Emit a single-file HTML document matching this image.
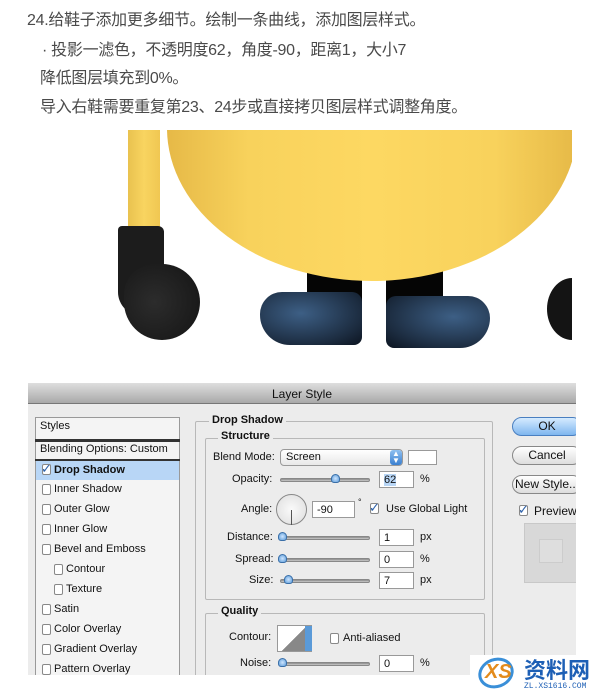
<!DOCTYPE html>
<html><head><meta charset="utf-8"><style>
*{margin:0;padding:0;box-sizing:border-box}
body{width:600px;height:693px;background:#fff;position:relative;overflow:hidden;font-family:"Liberation Sans","Noto Sans CJK SC",sans-serif}
.t{position:absolute;font-size:16px;color:#4a4a4a;white-space:nowrap;font-family:"Liberation Sans","Noto Sans CJK SC",sans-serif;letter-spacing:-0.3px}
.a{position:absolute}
.dlg{position:absolute;left:28px;top:383px;width:548px;height:292px;background:#ececec;overflow:hidden}
.dlg *{font-family:"Liberation Sans","DejaVu Sans",sans-serif}
.l{position:absolute;font-size:11px;color:#111;white-space:nowrap}
.b{font-weight:bold}
.cb{position:absolute;width:9px;height:11px;border:1px solid #888;border-radius:2px;background:#fff}
.inp{position:absolute;height:17px;background:#fff;border:1px solid #999;font-size:11px;padding:2px 4px;color:#111}
.sl{position:absolute;height:4px;border-radius:2px;background:linear-gradient(#888,#ccc);border:1px solid #888}
.kn{position:absolute;width:9px;height:9px;border-radius:50% 50% 3px 3px;background:radial-gradient(#cfe6ff,#5a9ad8);border:1px solid #3a6fa8}
.fs{position:absolute;border:1px solid #b8b8b8;border-radius:2px}
.btn{position:absolute;left:484px;width:70px;height:19px;border:1px solid #888;border-radius:10px;background:linear-gradient(#fff,#ddd);font-size:12px;text-align:center;line-height:17px;color:#111}
</style></head><body>
<div class="t" style="left:27px;top:6px">24.给鞋子添加更多细节。绘制一条曲线，添加图层样式。</div>
<div class="t" style="left:42px;top:36px">· 投影一滤色，不透明度62，角度-90，距离1，大小7</div>
<div class="t" style="left:40px;top:64px">降低图层填充到0%。</div>
<div class="t" style="left:40px;top:93px">导入右鞋需要重复第23、24步或直接拷贝图层样式调整角度。</div>

<div class="a" style="left:0;top:130px;width:572px;height:245px;overflow:hidden">
 <div class="a" style="left:128px;top:0;width:32px;height:100px;background:linear-gradient(90deg,#e9c24f,#f8d460 50%,#f0c752);border-radius:0 0 4px 4px"></div>
 <div class="a" style="left:307px;top:140px;width:55px;height:40px;background:#050505"></div>
 <div class="a" style="left:386px;top:140px;width:57px;height:40px;background:#050505"></div>
 <div class="a" style="left:167px;top:-155px;width:410px;height:306px;border-radius:50%;background:linear-gradient(90deg,#e6b947,#f8d25c 20%,#fdd862 50%,#f8d25c 80%,#e6b947)"></div>
 <div class="a" style="left:260px;top:162px;width:102px;height:53px;border-radius:22px 10px 8px 30px;background:radial-gradient(ellipse at 40% 40%,#3d5f85,#1c2c40 70%,#0c1420)"></div>
 <div class="a" style="left:386px;top:166px;width:104px;height:52px;border-radius:10px 22px 30px 8px;background:radial-gradient(ellipse at 65% 40%,#3d5f85,#1c2c40 70%,#0c1420)"></div>
 <div class="a" style="left:118px;top:96px;width:46px;height:90px;border-radius:4px 6px 10px 24px;background:#1c1c1c"></div>
 <div class="a" style="left:124px;top:134px;width:76px;height:76px;border-radius:40% 50% 50% 50%;background:radial-gradient(circle at 40% 50%,#2c2c2c,#141414)"></div>
 <div class="a" style="left:547px;top:148px;width:50px;height:62px;border-radius:50%;background:#141414"></div>
</div>

<div class="dlg">
 <div class="a" style="left:0;top:0;width:548px;height:21px;background:linear-gradient(#dedede,#a9a9a9);border-bottom:1px solid #777"></div>
 <div class="l" style="left:0;width:548px;top:4px;text-align:center;font-size:12px">Layer Style</div>
 <div class="a" style="left:7px;top:34px;width:145px;height:260px;background:#f4f4f4;border:1px solid #999"></div>
 <div class="l" style="left:12px;top:37px">Styles</div>
 <div class="a" style="left:7px;top:56px;width:145px;height:3px;background:#333"></div>
 <div class="l" style="left:12px;top:60px">Blending Options: Custom</div>
 <div class="a" style="left:7px;top:76px;width:145px;height:2px;background:#333"></div>
 <div class="a" style="left:8px;top:78px;width:143px;height:19px;background:#b8d6f6"></div>
 <div class="cb" style="left:14px;top:81px"></div><div class="l b" style="left:13px;top:78px;color:#2a5ea8;font-size:13px">✓</div>
 <div class="l b" style="left:26px;top:81px">Drop Shadow</div>
 <div class="cb" style="left:14px;top:101px"></div><div class="l" style="left:26px;top:100px">Inner Shadow</div>
 <div class="cb" style="left:14px;top:121px"></div><div class="l" style="left:26px;top:120px">Outer Glow</div>
 <div class="cb" style="left:14px;top:141px"></div><div class="l" style="left:26px;top:140px">Inner Glow</div>
 <div class="cb" style="left:14px;top:161px"></div><div class="l" style="left:26px;top:160px">Bevel and Emboss</div>
 <div class="cb" style="left:26px;top:181px"></div><div class="l" style="left:38px;top:180px">Contour</div>
 <div class="cb" style="left:26px;top:201px"></div><div class="l" style="left:38px;top:200px">Texture</div>
 <div class="cb" style="left:14px;top:221px"></div><div class="l" style="left:26px;top:220px">Satin</div>
 <div class="cb" style="left:14px;top:241px"></div><div class="l" style="left:26px;top:240px">Color Overlay</div>
 <div class="cb" style="left:14px;top:261px"></div><div class="l" style="left:26px;top:260px">Gradient Overlay</div>
 <div class="cb" style="left:14px;top:281px"></div><div class="l" style="left:26px;top:280px">Pattern Overlay</div>

 <div class="fs" style="left:167px;top:38px;width:298px;height:260px"></div>
 <div class="l b" style="left:181px;top:31px;background:#ececec;padding:0 3px">Drop Shadow</div>
 <div class="fs" style="left:177px;top:55px;width:280px;height:162px"></div>
 <div class="l b" style="left:190px;top:47px;background:#ececec;padding:0 3px">Structure</div>
 <div class="l" style="left:185px;top:68px">Blend Mode:</div>
 <div class="a" style="left:252px;top:66px;width:123px;height:17px;border:1px solid #999;border-radius:4px;background:linear-gradient(#fff,#e8e8e8)"></div>
 <div class="l" style="left:258px;top:68px">Screen</div>
 <div class="a" style="left:362px;top:67px;width:12px;height:15px;border-radius:3px;background:linear-gradient(#8fc0f0,#3a7fd0);color:#fff;font-size:8px;text-align:center;line-height:7px">▲<br>▼</div>
 <div class="a" style="left:380px;top:67px;width:29px;height:15px;background:#fff;border:1px solid #999"></div>
 <div class="l" style="left:204px;top:90px">Opacity:</div>
 <div class="sl" style="left:252px;top:95px;width:90px"></div><div class="kn" style="left:303px;top:91px"></div>
 <div class="inp" style="left:351px;top:88px;width:35px"><span style="background:#b8d6f6">62</span></div><div class="l" style="left:392px;top:90px">%</div>
 <div class="l" style="left:213px;top:120px">Angle:</div>
 <div class="a" style="left:248px;top:111px;width:31px;height:31px;border-radius:50%;border:1px solid #888;background:radial-gradient(#fafafa,#ddd)"></div>
 <div class="a" style="left:263px;top:127px;width:1px;height:15px;background:#555"></div>
 <div class="inp" style="left:284px;top:118px;width:43px">-90</div><div class="l" style="left:330px;top:114px;font-size:9px">°</div>
 <div class="cb" style="left:342px;top:120px"></div><div class="l b" style="left:341px;top:117px;color:#2a5ea8;font-size:13px">✓</div>
 <div class="l" style="left:358px;top:120px">Use Global Light</div>
 <div class="l" style="left:199px;top:148px">Distance:</div>
 <div class="sl" style="left:252px;top:153px;width:90px"></div><div class="kn" style="left:250px;top:149px"></div>
 <div class="inp" style="left:351px;top:146px;width:35px">1</div><div class="l" style="left:392px;top:148px">px</div>
 <div class="l" style="left:207px;top:170px">Spread:</div>
 <div class="sl" style="left:252px;top:175px;width:90px"></div><div class="kn" style="left:250px;top:171px"></div>
 <div class="inp" style="left:351px;top:168px;width:35px">0</div><div class="l" style="left:392px;top:170px">%</div>
 <div class="l" style="left:221px;top:191px">Size:</div>
 <div class="sl" style="left:252px;top:196px;width:90px"></div><div class="kn" style="left:256px;top:192px"></div>
 <div class="inp" style="left:351px;top:189px;width:35px">7</div><div class="l" style="left:392px;top:191px">px</div>

 <div class="fs" style="left:177px;top:230px;width:280px;height:80px"></div>
 <div class="l b" style="left:190px;top:222px;background:#ececec;padding:0 3px">Quality</div>
 <div class="l" style="left:201px;top:248px">Contour:</div>
 <div class="a" style="left:249px;top:242px;width:35px;height:27px;border:1px solid #999;background:linear-gradient(135deg,#fff 50%,#888 50%)"></div>
 <div class="a" style="left:277px;top:243px;width:7px;height:25px;background:#5a9ad8"></div>
 <div class="cb" style="left:302px;top:250px"></div><div class="l" style="left:315px;top:249px">Anti-aliased</div>
 <div class="l" style="left:212px;top:274px">Noise:</div>
 <div class="sl" style="left:252px;top:279px;width:90px"></div><div class="kn" style="left:250px;top:275px"></div>
 <div class="inp" style="left:351px;top:272px;width:35px">0</div><div class="l" style="left:392px;top:274px">%</div>

 <div class="btn" style="top:34px;background:linear-gradient(#d6ebff,#7fb6ef);border-color:#4a7fc0">OK</div>
 <div class="btn" style="top:63px">Cancel</div>
 <div class="btn" style="top:92px">New Style...</div>
 <div class="cb" style="left:491px;top:122px"></div><div class="l b" style="left:490px;top:119px;color:#2a5ea8;font-size:13px">✓</div>
 <div class="l" style="left:506px;top:121px;font-size:12px">Preview</div>
 <div class="a" style="left:496px;top:140px;width:60px;height:60px;background:#d8d8d8;border:1px solid #c8c8c8"></div>
 <div class="a" style="left:511px;top:156px;width:24px;height:24px;border:1px solid #ccc;background:#dedede"></div>
</div>
<div class="a" style="left:470px;top:655px;width:130px;height:38px;background:#fff"></div>
<div class="a" style="left:478px;top:658px;width:36px;height:30px;border:3px solid #3a8fd8;border-radius:50%;transform:rotate(-20deg)"></div>
<div class="a" style="left:485px;top:661px;font-size:20px;font-style:italic;color:#e38b1c;font-weight:bold">XS</div>
<div class="a" style="left:524px;top:656px;font-size:22px;font-weight:bold;color:#1d5fb5;font-family:'Noto Sans CJK SC',sans-serif;line-height:26px">资料网</div>
<div class="a" style="left:524px;top:682px;font-size:8px;color:#1d5fb5;font-family:'Liberation Mono',monospace">ZL.XS1616.COM</div>
</body></html>
